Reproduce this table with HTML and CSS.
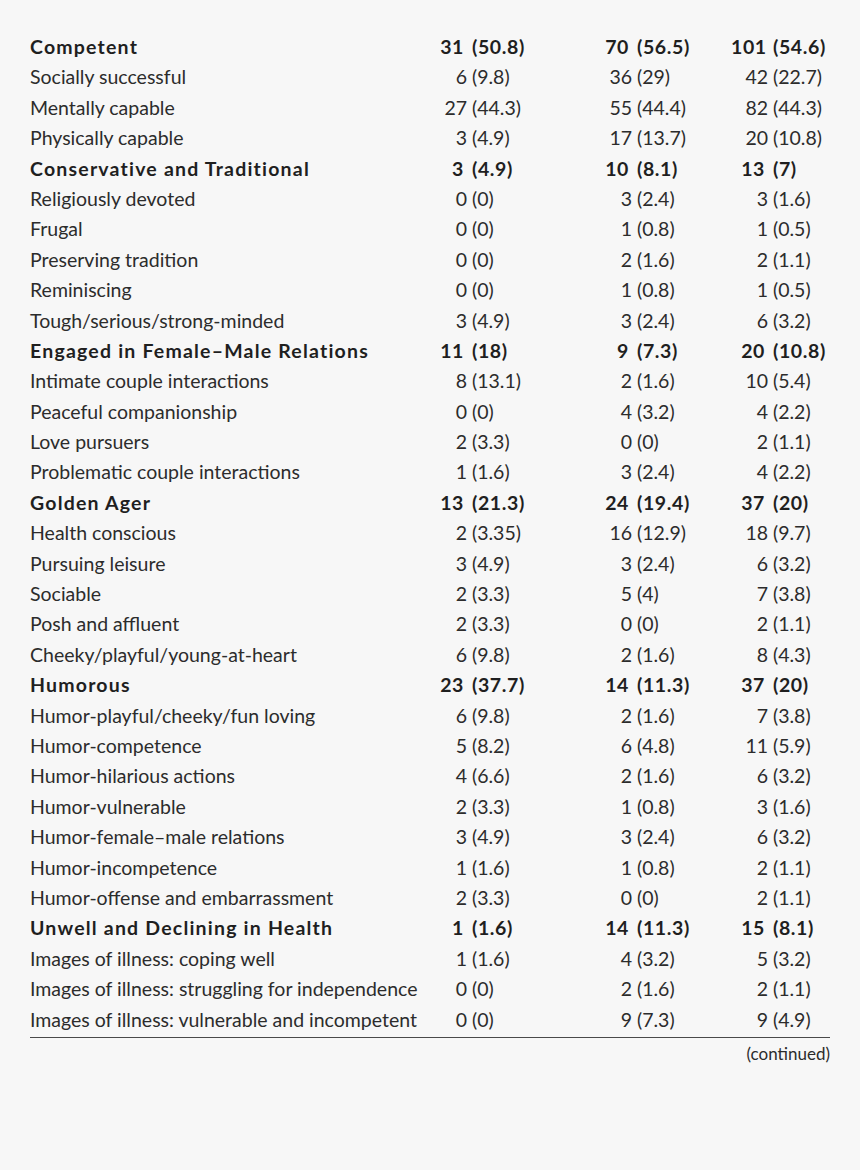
FILE: index.html
```html
<!DOCTYPE html>
<html lang="en">
<head>
<meta charset="utf-8">
<title>Table</title>
<link rel="stylesheet" href="styles.css">
</head>
<body>
<div class="page">
  <div class="table">
    <div class="row head"><span class="label">Competent</span><span class="c c1">31</span><span class="p p1">(50.8)</span><span class="c c2">70</span><span class="p p2">(56.5)</span><span class="c c3">101</span><span class="p p3">(54.6)</span></div>
    <div class="row"><span class="label">Socially successful</span><span class="c c1">6</span><span class="p p1">(9.8)</span><span class="c c2">36</span><span class="p p2">(29)</span><span class="c c3">42</span><span class="p p3">(22.7)</span></div>
    <div class="row"><span class="label">Mentally capable</span><span class="c c1">27</span><span class="p p1">(44.3)</span><span class="c c2">55</span><span class="p p2">(44.4)</span><span class="c c3">82</span><span class="p p3">(44.3)</span></div>
    <div class="row"><span class="label">Physically capable</span><span class="c c1">3</span><span class="p p1">(4.9)</span><span class="c c2">17</span><span class="p p2">(13.7)</span><span class="c c3">20</span><span class="p p3">(10.8)</span></div>
    <div class="row head"><span class="label">Conservative and Traditional</span><span class="c c1">3</span><span class="p p1">(4.9)</span><span class="c c2">10</span><span class="p p2">(8.1)</span><span class="c c3">13</span><span class="p p3">(7)</span></div>
    <div class="row"><span class="label">Religiously devoted</span><span class="c c1">0</span><span class="p p1">(0)</span><span class="c c2">3</span><span class="p p2">(2.4)</span><span class="c c3">3</span><span class="p p3">(1.6)</span></div>
    <div class="row"><span class="label">Frugal</span><span class="c c1">0</span><span class="p p1">(0)</span><span class="c c2">1</span><span class="p p2">(0.8)</span><span class="c c3">1</span><span class="p p3">(0.5)</span></div>
    <div class="row"><span class="label">Preserving tradition</span><span class="c c1">0</span><span class="p p1">(0)</span><span class="c c2">2</span><span class="p p2">(1.6)</span><span class="c c3">2</span><span class="p p3">(1.1)</span></div>
    <div class="row"><span class="label">Reminiscing</span><span class="c c1">0</span><span class="p p1">(0)</span><span class="c c2">1</span><span class="p p2">(0.8)</span><span class="c c3">1</span><span class="p p3">(0.5)</span></div>
    <div class="row"><span class="label">Tough/serious/strong-minded</span><span class="c c1">3</span><span class="p p1">(4.9)</span><span class="c c2">3</span><span class="p p2">(2.4)</span><span class="c c3">6</span><span class="p p3">(3.2)</span></div>
    <div class="row head"><span class="label">Engaged in Female–Male Relations</span><span class="c c1">11</span><span class="p p1">(18)</span><span class="c c2">9</span><span class="p p2">(7.3)</span><span class="c c3">20</span><span class="p p3">(10.8)</span></div>
    <div class="row"><span class="label">Intimate couple interactions</span><span class="c c1">8</span><span class="p p1">(13.1)</span><span class="c c2">2</span><span class="p p2">(1.6)</span><span class="c c3">10</span><span class="p p3">(5.4)</span></div>
    <div class="row"><span class="label">Peaceful companionship</span><span class="c c1">0</span><span class="p p1">(0)</span><span class="c c2">4</span><span class="p p2">(3.2)</span><span class="c c3">4</span><span class="p p3">(2.2)</span></div>
    <div class="row"><span class="label">Love pursuers</span><span class="c c1">2</span><span class="p p1">(3.3)</span><span class="c c2">0</span><span class="p p2">(0)</span><span class="c c3">2</span><span class="p p3">(1.1)</span></div>
    <div class="row"><span class="label">Problematic couple interactions</span><span class="c c1">1</span><span class="p p1">(1.6)</span><span class="c c2">3</span><span class="p p2">(2.4)</span><span class="c c3">4</span><span class="p p3">(2.2)</span></div>
    <div class="row head"><span class="label">Golden Ager</span><span class="c c1">13</span><span class="p p1">(21.3)</span><span class="c c2">24</span><span class="p p2">(19.4)</span><span class="c c3">37</span><span class="p p3">(20)</span></div>
    <div class="row"><span class="label">Health conscious</span><span class="c c1">2</span><span class="p p1">(3.35)</span><span class="c c2">16</span><span class="p p2">(12.9)</span><span class="c c3">18</span><span class="p p3">(9.7)</span></div>
    <div class="row"><span class="label">Pursuing leisure</span><span class="c c1">3</span><span class="p p1">(4.9)</span><span class="c c2">3</span><span class="p p2">(2.4)</span><span class="c c3">6</span><span class="p p3">(3.2)</span></div>
    <div class="row"><span class="label">Sociable</span><span class="c c1">2</span><span class="p p1">(3.3)</span><span class="c c2">5</span><span class="p p2">(4)</span><span class="c c3">7</span><span class="p p3">(3.8)</span></div>
    <div class="row"><span class="label">Posh and affluent</span><span class="c c1">2</span><span class="p p1">(3.3)</span><span class="c c2">0</span><span class="p p2">(0)</span><span class="c c3">2</span><span class="p p3">(1.1)</span></div>
    <div class="row"><span class="label">Cheeky/playful/young-at-heart</span><span class="c c1">6</span><span class="p p1">(9.8)</span><span class="c c2">2</span><span class="p p2">(1.6)</span><span class="c c3">8</span><span class="p p3">(4.3)</span></div>
    <div class="row head"><span class="label">Humorous</span><span class="c c1">23</span><span class="p p1">(37.7)</span><span class="c c2">14</span><span class="p p2">(11.3)</span><span class="c c3">37</span><span class="p p3">(20)</span></div>
    <div class="row"><span class="label">Humor-playful/cheeky/fun loving</span><span class="c c1">6</span><span class="p p1">(9.8)</span><span class="c c2">2</span><span class="p p2">(1.6)</span><span class="c c3">7</span><span class="p p3">(3.8)</span></div>
    <div class="row"><span class="label">Humor-competence</span><span class="c c1">5</span><span class="p p1">(8.2)</span><span class="c c2">6</span><span class="p p2">(4.8)</span><span class="c c3">11</span><span class="p p3">(5.9)</span></div>
    <div class="row"><span class="label">Humor-hilarious actions</span><span class="c c1">4</span><span class="p p1">(6.6)</span><span class="c c2">2</span><span class="p p2">(1.6)</span><span class="c c3">6</span><span class="p p3">(3.2)</span></div>
    <div class="row"><span class="label">Humor-vulnerable</span><span class="c c1">2</span><span class="p p1">(3.3)</span><span class="c c2">1</span><span class="p p2">(0.8)</span><span class="c c3">3</span><span class="p p3">(1.6)</span></div>
    <div class="row"><span class="label">Humor-female–male relations</span><span class="c c1">3</span><span class="p p1">(4.9)</span><span class="c c2">3</span><span class="p p2">(2.4)</span><span class="c c3">6</span><span class="p p3">(3.2)</span></div>
    <div class="row"><span class="label">Humor-incompetence</span><span class="c c1">1</span><span class="p p1">(1.6)</span><span class="c c2">1</span><span class="p p2">(0.8)</span><span class="c c3">2</span><span class="p p3">(1.1)</span></div>
    <div class="row"><span class="label">Humor-offense and embarrassment</span><span class="c c1">2</span><span class="p p1">(3.3)</span><span class="c c2">0</span><span class="p p2">(0)</span><span class="c c3">2</span><span class="p p3">(1.1)</span></div>
    <div class="row head"><span class="label">Unwell and Declining in Health</span><span class="c c1">1</span><span class="p p1">(1.6)</span><span class="c c2">14</span><span class="p p2">(11.3)</span><span class="c c3">15</span><span class="p p3">(8.1)</span></div>
    <div class="row"><span class="label">Images of illness: coping well</span><span class="c c1">1</span><span class="p p1">(1.6)</span><span class="c c2">4</span><span class="p p2">(3.2)</span><span class="c c3">5</span><span class="p p3">(3.2)</span></div>
    <div class="row"><span class="label">Images of illness: struggling for independence</span><span class="c c1">0</span><span class="p p1">(0)</span><span class="c c2">2</span><span class="p p2">(1.6)</span><span class="c c3">2</span><span class="p p3">(1.1)</span></div>
    <div class="row"><span class="label">Images of illness: vulnerable and incompetent</span><span class="c c1">0</span><span class="p p1">(0)</span><span class="c c2">9</span><span class="p p2">(7.3)</span><span class="c c3">9</span><span class="p p3">(4.9)</span></div>
  </div>
  <div class="continued">(continued)</div>
</div>
</body>
</html>
```

FILE: styles.css
```css
html, body {
  margin: 0;
  padding: 0;
  background: #f7f7f7;
}

.page {
  width: 800px;
  padding: 32px 30px 0 30px;
  font-family: "Lato", "Open Sans", sans-serif;
  color: #2c2c2c;
  font-size: 19.5px;
}

.table {
  border-bottom: 1.5px solid #4a4a4a;
  padding-bottom: 2px;
}

.row {
  display: grid;
  grid-template-columns: 400px 37px 133px 32px 99px 37px 1fr;
  height: 30.4px;
  line-height: 30.4px;
  white-space: nowrap;
}

.row.head {
  font-weight: 700;
  color: #1f1f1f;
  letter-spacing: 1.2px;
}

.c {
  text-align: right;
}

.head .c {
  letter-spacing: 0.6px;
  padding-right: 3px;
}

.head .p {
  letter-spacing: 0.6px;
}

.p {
  padding-left: 5px;
}

.continued {
  text-align: right;
  font-size: 17px;
  line-height: 30px;
  margin-top: 1px;
}
```
